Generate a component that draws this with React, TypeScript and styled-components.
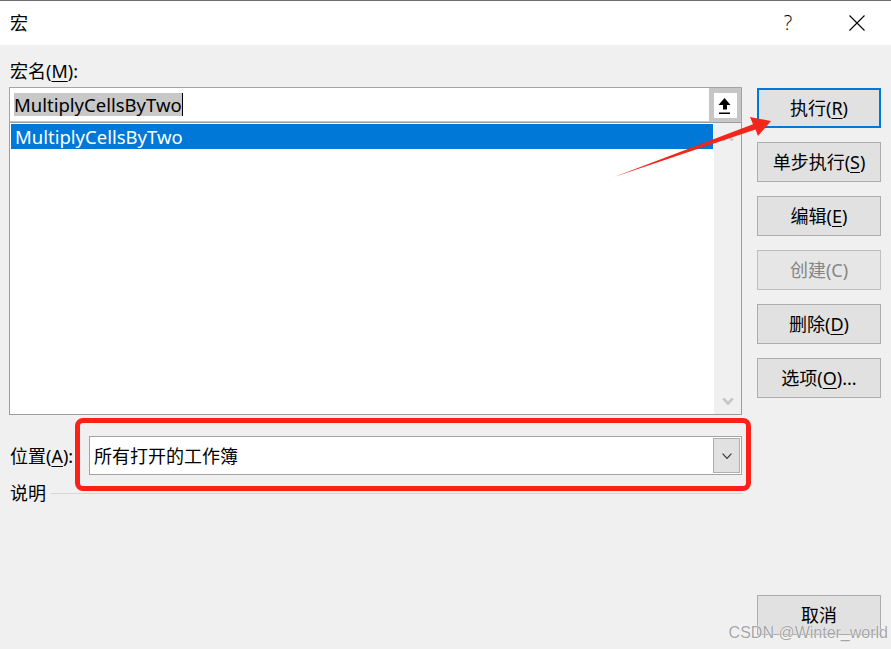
import React from "react";
import styled, { createGlobalStyle, css } from "styled-components";

const GlobalStyle = createGlobalStyle`
  html, body { margin: 0; padding: 0; background: #f0f0f0; }
  body { font-family: "Noto Sans", "Noto Sans CJK SC", sans-serif; }
  *, *::before, *::after { box-sizing: border-box; }
`;

const Dialog = styled.div`
  position: relative;
  width: 891px;
  height: 649px;
  overflow: hidden;
  display: flex;
  flex-direction: column;
  background: #f0f0f0;
  color: #000;
  font-size: 18px;
  font-family: "Noto Sans", "Noto Sans CJK SC", sans-serif;
`;

const TitleBar = styled.div`
  height: 45px;
  flex: none;
  display: flex;
  align-items: center;
  background: #fff;
  border-top: 1px solid #6e6e6e;
  padding-left: 10px;
`;

const Title = styled.div`
  font-size: 18px;
  line-height: 24px;
  flex: 1;
`;

const HelpBtn = styled.div`
  width: 46px;
  text-align: center;
  font-size: 20px;
  line-height: 24px;
  font-weight: 300;
  font-family: "Open Sans", "Noto Sans", sans-serif;
`;

const CloseBtn = styled.div`
  width: 68px;
  margin-left: 12px;
  display: flex;
  justify-content: center;
  align-items: center;
`;

const Main = styled.div`
  flex: 1;
  display: flex;
  gap: 15px;
  padding-left: 9px;
`;

const LeftCol = styled.div`
  width: 733px;
  display: flex;
  flex-direction: column;
  padding-top: 14px;
`;

const RightCol = styled.div`
  width: 124px;
  display: flex;
  flex-direction: column;
  gap: 14px;
  padding-top: 43px;
  padding-bottom: 14px;
`;

const Label = styled.div`
  line-height: 24px;
  padding-left: 1px;
  white-space: nowrap;
`;

const U = styled.span`
  text-decoration: underline;
  text-underline-offset: 3px;
  text-decoration-thickness: 1px;
`;

const InputBox = styled.div`
  margin-top: 4px;
  height: 35px;
  display: flex;
  align-items: stretch;
  background: #fff;
  border: 1px solid #a4a4a4;
  border-bottom-color: #c8c8c8;
`;

const InputText = styled.div`
  flex: 1;
  display: flex;
  align-items: center;
  padding-left: 4px;
`;

const Selection = styled.span`
  background: #c8c8c8;
  font-size: 18.5px;
  line-height: 23px;
  height: 23px;
  border-right: 1px solid #000;
`;

const UploadBtn = styled.div`
  width: 32px;
  background: #c6c6c6;
  display: flex;
  align-items: center;
  justify-content: center;
  padding: 1px 0 0 1px;
`;

const UploadFace = styled.div`
  width: 23px;
  height: 25px;
  background: #fff;
`;

const ListBox = styled.div`
  height: 293px;
  display: flex;
  background: #fff;
  border: 1px solid #9c9c9c;
`;

const ListItems = styled.div`
  flex: 1;
  padding: 1px;
`;

const ListItem = styled.div<{ $selected?: boolean }>`
  height: 25px;
  line-height: 25px;
  font-size: 18.5px;
  padding-left: 4px;
  ${(p) =>
    p.$selected &&
    css`
      background: #0078d7;
      color: #fff;
    `}
`;

const ScrollBar = styled.div`
  width: 27px;
  background: #f0f0f0;
  display: flex;
  flex-direction: column;
  justify-content: space-between;
  align-items: center;
  padding: 11px 0 9px;
`;

const Row = styled.div<{ $mt: number }>`
  display: flex;
  align-items: center;
  margin-top: ${(p) => p.$mt}px;
`;

const RowLabel = styled(Label)`
  width: 80px;
  flex: none;
`;

const Combo = styled.div`
  flex: 1;
  height: 39px;
  display: flex;
  align-items: center;
  background: #fff;
  border: 1px solid #a4a4a4;
  padding: 1px 1px 1px 4px;
`;

const ComboText = styled.div`
  flex: 1;
  line-height: 24px;
`;

const ComboBtn = styled.div`
  width: 27px;
  height: 35px;
  background: #e1e1e1;
  border: 1px solid #adadad;
  display: flex;
  align-items: center;
  justify-content: center;
`;

const Separator = styled.div`
  flex: 1;
  height: 1px;
  background: #d6d6d6;
  margin-left: 5px;
`;

const Button = styled.button<{ $primary?: boolean; $disabled?: boolean }>`
  height: 40px;
  width: 100%;
  padding: 0;
  font: inherit;
  font-size: 18px;
  line-height: 24px;
  background: #e1e1e1;
  color: ${(p) => (p.$disabled ? "#858585" : "#000")};
  border: ${(p) => (p.$primary ? "2px solid #0078d7" : "1px solid #adadad")};
  ${(p) =>
    p.$disabled &&
    css`
      border-color: #bfbfbf;
      background: #e6e6e6;
    `}
`;

const CancelButton = styled(Button)`
  margin-top: auto;
`;

const Highlight = styled.div`
  position: absolute;
  left: 75px;
  top: 418px;
  width: 676px;
  height: 73px;
  border: 5px solid #fb2119;
  border-radius: 8px;
  pointer-events: none;
`;

const Overlay = styled.svg`
  position: absolute;
  left: 0;
  top: 0;
  pointer-events: none;
`;

const Watermark = styled.div`
  position: absolute;
  right: 3px;
  bottom: 8px;
  font-family: "Liberation Sans", Arial, sans-serif;
  font-size: 16px;
  line-height: 16px;
  color: #a5a5a5;
  text-shadow: 0 0 1px #fff, 0 0 1px #fff;
  pointer-events: none;
`;

const Chevron = ({ up, color, w, h, sw }: { up?: boolean; color: string; w: number; h: number; sw: number }) => (
  <svg width={w} height={h} viewBox={`0 0 ${w} ${h}`}>
    <polyline
      points={
        up
          ? `${sw / 2},${h - sw / 2} ${w / 2},${sw / 2} ${w - sw / 2},${h - sw / 2}`
          : `${sw / 2},${sw / 2} ${w / 2},${h - sw / 2} ${w - sw / 2},${sw / 2}`
      }
      fill="none"
      stroke={color}
      strokeWidth={sw}
    />
  </svg>
);

export default function App() {
  return (
    <>
      <GlobalStyle />
      <Dialog>
        <TitleBar>
          <Title>宏</Title>
          <HelpBtn>?</HelpBtn>
          <CloseBtn>
            <svg width="16" height="16" viewBox="0 0 16 16">
              <path d="M0.5 0.5 L15.5 15.5 M15.5 0.5 L0.5 15.5" stroke="#000" strokeWidth="1.1" />
            </svg>
          </CloseBtn>
        </TitleBar>
        <Main>
          <LeftCol>
            <Label>
              宏名(<U>M</U>):
            </Label>
            <InputBox>
              <InputText>
                <Selection>MultiplyCellsByTwo</Selection>
              </InputText>
              <UploadBtn>
                <UploadFace>
                  <svg width="23" height="25" viewBox="0 0 23 25">
                    <polygon points="10.5,5 16.5,12 13,12 13,16.5 9,16.5 9,12 4.5,12" fill="#000" />
                    <rect x="5" y="19.5" width="11" height="1.5" fill="#000" />
                  </svg>
                </UploadFace>
              </UploadBtn>
            </InputBox>
            <ListBox>
              <ListItems>
                <ListItem $selected>MultiplyCellsByTwo</ListItem>
              </ListItems>
              <ScrollBar>
                <Chevron up color="#c6c6c6" w={12} h={8} sw={2.6} />
                <Chevron color="#c6c6c6" w={12} h={8} sw={2.6} />
              </ScrollBar>
            </ListBox>
            <Row $mt={21}>
              <RowLabel>
                位置(<U>A</U>):
              </RowLabel>
              <Combo>
                <ComboText>所有打开的工作簿</ComboText>
                <ComboBtn>
                  <Chevron color="#3a3a3a" w={10} h={6} sw={1.2} />
                </ComboBtn>
              </Combo>
            </Row>
            <Row $mt={6}>
              <Label>说明</Label>
              <Separator />
            </Row>
          </LeftCol>
          <RightCol>
            <Button $primary>
              执行(<U>R</U>)
            </Button>
            <Button>
              单步执行(<U>S</U>)
            </Button>
            <Button>
              编辑(<U>E</U>)
            </Button>
            <Button $disabled>创建(C)</Button>
            <Button>
              删除(<U>D</U>)
            </Button>
            <Button>
              选项(<U>O</U>)...
            </Button>
            <CancelButton>取消</CancelButton>
          </RightCol>
        </Main>
        <Highlight />
        <Overlay width="891" height="649" viewBox="0 0 891 649">
          <polygon
            points="614,177 753,124.3 750,117 771,121 758,136 755.5,129.6"
            fill="#f3261c"
          />
        </Overlay>
        <Watermark>CSDN @Winter_world</Watermark>
      </Dialog>
    </>
  );
}
